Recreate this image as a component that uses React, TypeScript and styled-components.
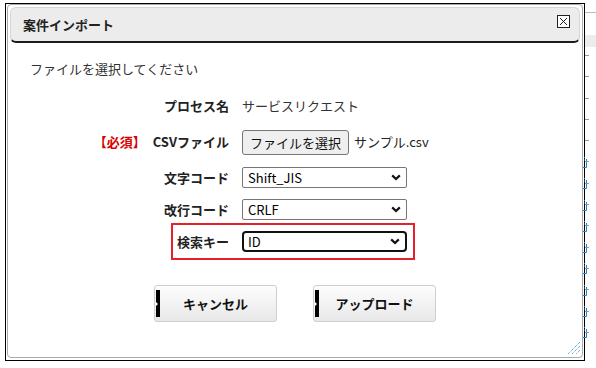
import React, { FC, ReactElement } from 'react';
import styled, { createGlobalStyle } from 'styled-components';

const GlobalStyle = createGlobalStyle`
    html, body {
        margin: 0;
        padding: 0;
        background: #fff;
    }
    body {
        font-family: "Noto Sans CJK JP", "Noto Sans", sans-serif;
        color: #333;
    }
`;

type Row = {
    label: string;
    required?: boolean;
    kind: 'text' | 'file' | 'select';
    value: string;
    focused?: boolean;
    highlight?: boolean;
};

const rows: Row[] = [
    { label: 'プロセス名', kind: 'text', value: 'サービスリクエスト' },
    { label: 'CSVファイル', required: true, kind: 'file', value: 'サンプル.csv' },
    { label: '文字コード', kind: 'select', value: 'Shift_JIS' },
    { label: '改行コード', kind: 'select', value: 'CRLF' },
    { label: '検索キー', kind: 'select', value: 'ID', focused: true, highlight: true },
];

const Chevron: FC = (): ReactElement => (
    <svg width="10" height="7" viewBox="0 0 10 7">
        <path d="M1.2 1.4 L5 5 L8.8 1.4" fill="none" stroke="#111" strokeWidth="2.2" />
    </svg>
);

const CloseIcon: FC = (): ReactElement => (
    <svg width="13" height="13" viewBox="0 0 13 13">
        <rect x="0.5" y="0.5" width="12" height="12" fill="#fff" stroke="#222" />
        <path d="M3 3 L10 10 M10 3 L3 10" stroke="#222" strokeWidth="1" />
    </svg>
);

const ResizeGrip: FC = (): ReactElement => (
    <svg width="12" height="12" viewBox="0 0 12 12">
        <g stroke="#1f8bd6" strokeWidth="1" strokeDasharray="1 1">
            <path d="M12 0 L0 12" />
            <path d="M12 4 L4 12" />
            <path d="M12 8 L8 12" />
        </g>
    </svg>
);

const RowIcon: FC = (): ReactElement => (
    <svg width="5" height="11" viewBox="0 0 5 11">
        <path d="M0.5 2 V10.5 H4.5 V2" fill="none" stroke="#1a86d0" />
        <path d="M2.5 0 V1 M2.5 2.5 V3.5" stroke="#1a86d0" />
    </svg>
);

const App: FC = (): ReactElement => {
    return (
        <Page>
            <GlobalStyle />

            {/* page behind the dialog */}
            <Backdrop>
                <BackFrame>
                    <IconColumn>
                        {Array.from({ length: 9 }).map((_, i) => (
                            <IconCell key={i}>
                                <RowIcon />
                            </IconCell>
                        ))}
                    </IconColumn>
                </BackFrame>
                <RightStrip>
                    <HeadLine />
                    <HeadBlock />
                    {Array.from({ length: 14 }).map((_, i) => (
                        <Tick key={i} />
                    ))}
                </RightStrip>
            </Backdrop>

            <Dialog>
                <TitleBar>
                    <Title>案件インポート</Title>
                    <CloseButton>
                        <CloseIcon />
                    </CloseButton>
                </TitleBar>

                <Body>
                    <Intro>ファイルを選択してください</Intro>

                    <Form>
                        {rows.map((row: Row) => (
                            <FormRow key={row.label} $highlight={row.highlight}>
                                <Label>
                                    {row.required && <Required>【必須】</Required>}
                                    {row.label}
                                </Label>
                                <Value>
                                    {row.kind === 'text' && <PlainValue>{row.value}</PlainValue>}
                                    {row.kind === 'file' && (
                                        <>
                                            <FileButton>ファイルを選択</FileButton>
                                            <FileName>{row.value}</FileName>
                                        </>
                                    )}
                                    {row.kind === 'select' && (
                                        <SelectBox $focused={row.focused}>
                                            <span>{row.value}</span>
                                            <Chevron />
                                        </SelectBox>
                                    )}
                                </Value>
                            </FormRow>
                        ))}
                    </Form>

                    <ButtonRow>
                        <ActionButton>キャンセル</ActionButton>
                        <ActionButton>アップロード</ActionButton>
                    </ButtonRow>
                </Body>

                <Grip>
                    <ResizeGrip />
                </Grip>
            </Dialog>
        </Page>
    );
};

const Page = styled.div`
    position: relative;
    width: 596px;
    height: 368px;
    overflow: hidden;
    background: #fff;
`;

const Backdrop = styled.div`
    display: flex;
    height: 100%;
    padding: 3px 0 0 5px;
    box-sizing: border-box;
`;

const BackFrame = styled.div`
    width: 580px;
    height: 358px;
    box-sizing: border-box;
    border: 1px solid #000;
    display: flex;
    justify-content: flex-end;
`;

const IconColumn = styled.div`
    display: flex;
    flex-direction: column;
    margin-right: -3px;
    padding-top: 153px;
`;

const IconCell = styled.div`
    height: 21.3px;
    display: flex;
    align-items: flex-start;
`;

const RightStrip = styled.div`
    flex: 1;
    display: flex;
    flex-direction: column;
    margin-top: -3px;
`;

const HeadLine = styled.div`
    height: 13px;
    border-bottom: 1px solid #bbb;
    box-sizing: border-box;
    margin-bottom: 22px;
`;

const HeadBlock = styled.div`
    height: 12px;
    background: #ececec;
    margin-bottom: 8px;
`;

const Tick = styled.div`
    width: 4px;
    height: 21.3px;
    border-top: 1px solid #999;
    box-sizing: border-box;
`;

const Dialog = styled.div`
    position: absolute;
    left: 7px;
    top: 4px;
    width: 576px;
    height: 354px;
    box-sizing: border-box;
    padding: 2px;
    background: #fff;
    border: 1px solid #aaa;
    border-radius: 4px;
    display: flex;
    flex-direction: column;
`;

const TitleBar = styled.div`
    height: 36px;
    box-sizing: border-box;
    padding: 0 9px 0 12px;
    background: #ececec;
    border: 1px solid #d6d6d6;
    border-bottom: 2px solid #1c1c1c;
    border-radius: 6px;
    display: flex;
    align-items: center;
    justify-content: space-between;
`;

const Title = styled.div`
    font-size: 13px;
    line-height: 18px;
    font-weight: 700;
    color: #222;
`;

const CloseButton = styled.div`
    width: 13px;
    height: 13px;
    margin-bottom: 7px;
    display: flex;
`;

const Body = styled.div`
    flex: 1;
    display: flex;
    flex-direction: column;
    padding-top: 17px;
`;

const Intro = styled.div`
    margin-left: 20px;
    font-size: 13px;
    line-height: 18px;
    color: #333;
`;

const Form = styled.div`
    margin-top: 17px;
    display: flex;
    flex-direction: column;
    gap: 11px;
`;

const FormRow = styled.div<{ $highlight?: boolean }>`
    position: relative;
    display: grid;
    grid-template-columns: 219px 1fr;
    column-gap: 13px;
    align-items: center;
    min-height: 21px;

    &:first-child {
        min-height: 22px;
    }
    &:nth-child(2) {
        min-height: 28px;
    }

    &::after {
        content: '';
        display: ${(p) => (p.$highlight ? 'block' : 'none')};
        position: absolute;
        left: 161px;
        top: -8px;
        width: 244px;
        height: 37px;
        box-sizing: border-box;
        border: 2px solid #e3202b;
        pointer-events: none;
    }
`;

const Label = styled.div`
    text-align: right;
    font-size: 13px;
    line-height: 18px;
    font-weight: 700;
    color: #222;
    white-space: nowrap;
`;

const Required = styled.span`
    color: #dd0000;
    margin-right: 7px;
`;

const Value = styled.div`
    display: flex;
    align-items: center;
    gap: 5px;
`;

const PlainValue = styled.span`
    font-size: 13px;
    line-height: 18px;
    color: #333;
`;

const FileButton = styled.span`
    height: 25px;
    box-sizing: border-box;
    padding: 0 7px;
    display: inline-flex;
    align-items: center;
    border: 1px solid #767676;
    border-radius: 3px;
    background: #efefef;
    font-size: 13px;
    color: #111;
`;

const FileName = styled.span`
    font-size: 13px;
    line-height: 18px;
    color: #222;
`;

const SelectBox = styled.div<{ $focused?: boolean }>`
    width: 165px;
    height: 21px;
    box-sizing: border-box;
    padding: 0 5px 0 ${(p) => (p.$focused ? '4px' : '5px')};
    display: flex;
    align-items: center;
    justify-content: space-between;
    border: ${(p) => (p.$focused ? '2px solid #111' : '1px solid #767676')};
    border-radius: ${(p) => (p.$focused ? '4px' : '2px')};
    background: #fff;
    font-size: 13px;
    line-height: 18px;
    color: #000;
`;

const ButtonRow = styled.div`
    margin-top: 33px;
    display: flex;
    justify-content: center;
    gap: 36px;
`;

const ActionButton = styled.div`
    position: relative;
    width: 123px;
    height: 37px;
    box-sizing: border-box;
    display: flex;
    align-items: center;
    justify-content: center;
    border: 1px solid #cfcfcf;
    border-radius: 3px;
    background: linear-gradient(#fdfdfd, #e8e8e8);
    font-size: 13px;
    line-height: 18px;
    font-weight: 700;
    color: #111;

    &::before {
        content: '';
        position: absolute;
        left: 1px;
        top: 4px;
        bottom: 4px;
        width: 4px;
        background: #000;
    }
    &::after {
        content: '';
        position: absolute;
        left: 1px;
        top: 50%;
        margin-top: -2px;
        border-top: 2px solid transparent;
        border-bottom: 2px solid transparent;
        border-left: 2px solid #fff;
    }
`;

const Grip = styled.div`
    position: absolute;
    right: 2px;
    bottom: 3px;
    width: 12px;
    height: 12px;
    display: flex;
`;

export default App;
